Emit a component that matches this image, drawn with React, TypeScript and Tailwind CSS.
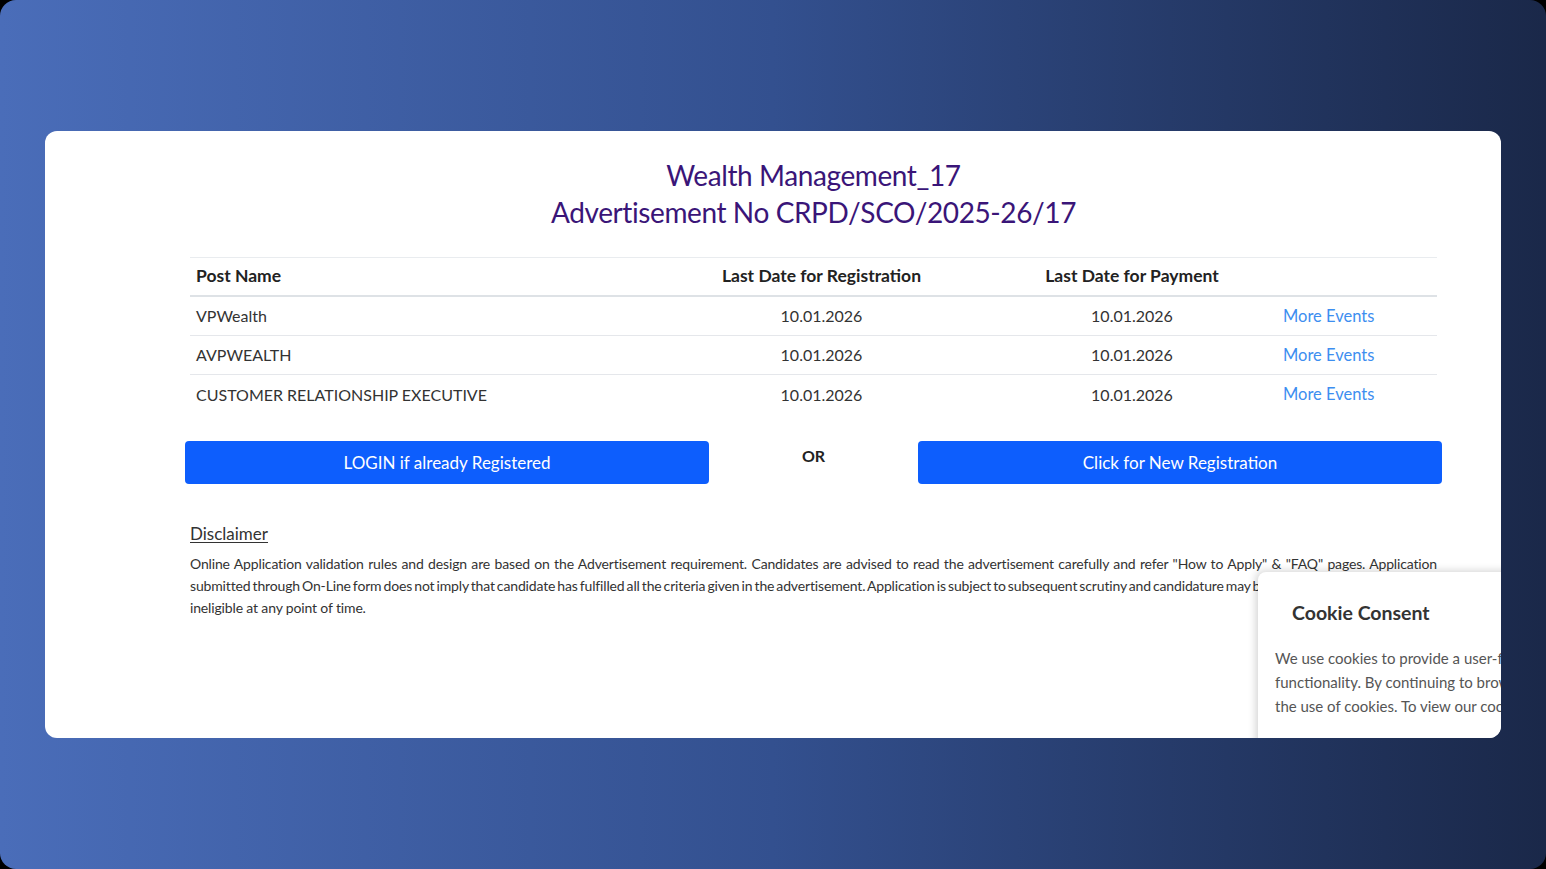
import React from 'react';

const rows = [
  { post: 'VPWealth', reg: '10.01.2026', pay: '10.01.2026' },
  { post: 'AVPWEALTH', reg: '10.01.2026', pay: '10.01.2026' },
  { post: 'CUSTOMER RELATIONSHIP EXECUTIVE', reg: '10.01.2026', pay: '10.01.2026' },
];

const cols = 'grid grid-cols-[476px_311px_310px_1fr] items-center';

const App = () => {
  return (
    <div className="w-[1546px] h-[869px] bg-black">
      <div
        className="w-full h-full rounded-[16px] bg-gradient-to-r from-[#4a6db9] via-[#33508f] to-[#1a2849] pt-[131px] px-[45px]"
        style={{ fontFamily: 'Lato, "Open Sans", sans-serif' }}
      >
        <div className="relative h-[607px] bg-white rounded-[12px] overflow-hidden pl-[145px] pr-[64px]">
          {/* Heading */}
          <div className="pt-[26px] text-center text-[#3a1578] text-[28px] leading-[37px] tracking-[-0.4px]">
            <div>Wealth Management_17</div>
            <div>Advertisement No CRPD/SCO/2025-26/17</div>
          </div>

          {/* Table */}
          <div className="mt-[26px] border-t border-[#e9ecef] text-[16px] text-[#333]">
            <div className={`${cols} h-[39px] border-b-2 border-[#dee2e6] font-bold text-[17.5px] text-[#222]`}>
              <div className="pl-[6px]">Post Name</div>
              <div className="text-center">Last Date for Registration</div>
              <div className="text-center">Last Date for Payment</div>
              <div />
            </div>
            {rows.map((r, i) => (
              <div
                key={r.post}
                className={`${cols} h-[39px] ${i < rows.length - 1 ? 'border-b border-[#e5e7eb]' : ''}`}
              >
                <div className="pl-[6px]">{r.post}</div>
                <div className="text-center">{r.reg}</div>
                <div className="text-center">{r.pay}</div>
                <div className="-ml-1 whitespace-nowrap text-[16.5px] text-[#3d8ef0]">More Events</div>
              </div>
            ))}
          </div>

          {/* Buttons */}
          <div className="-mx-[5px] mt-[27px] flex items-start">
            <button className="w-[524px] h-[43px] rounded-[4px] bg-[#0d5efd] text-white text-[17px]">
              LOGIN if already Registered
            </button>
            <div className="flex-1 text-center font-bold text-[16px] text-[#222] pt-[3px]">OR</div>
            <button className="w-[524px] h-[43px] rounded-[4px] bg-[#0d5efd] text-white text-[17px]">
              Click for New Registration
            </button>
          </div>

          {/* Disclaimer */}
          <div className="mt-[37px] text-[#333]">
            <div className="text-[17px] underline underline-offset-2">Disclaimer</div>
            <p className="mt-[6px] text-[14px] leading-[22px] tracking-[-0.15px] text-justify">
              Online Application validation rules and design are based on the Advertisement requirement. Candidates are advised to read the advertisement carefully and refer "How to Apply" &amp; "FAQ" pages. Application{' '}
              <span className="[word-spacing:-2px]">
                submitted through On-Line form does not imply that candidate has fulfilled all the criteria given in the advertisement. Application is subject to subsequent scrutiny and candidature may be rejected if candidate is found
              </span>{' '}
              ineligible at any point of time.
            </p>
          </div>

          {/* Cookie consent */}
          <div className="absolute left-[1213px] top-[441px] w-[360px] h-[220px] bg-white rounded-tl-[8px] shadow-[-2px_-1px_8px_rgba(0,0,0,0.18)]">
            <div className="pl-[34px] pt-[26px] text-[19.5px] font-bold text-[#333]">Cookie Consent</div>
            <p className="pl-[17px] pt-[19px] text-[15px] leading-[24px] text-[#555] whitespace-nowrap">
              We use cookies to provide a user-friendly
              <br />
              functionality. By continuing to browse, you agree to
              <br />
              the use of cookies. To view our cookie policy
            </p>
          </div>
        </div>
      </div>
    </div>
  );
};

export default App;
